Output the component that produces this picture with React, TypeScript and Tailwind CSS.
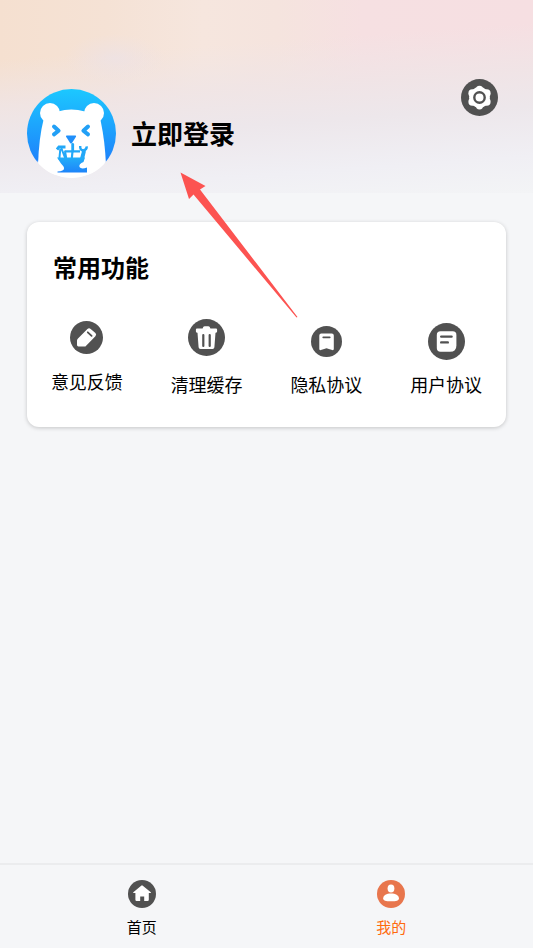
import React from 'react';

interface IconProps {
  className: string;
}

const SettingsIcon: React.FC<IconProps> = ({ className }) => (
  <svg viewBox="0 0 37 37" className={className} aria-hidden="true">
    <circle cx="18.5" cy="18.5" r="18.5" fill="#515151" />
    <g fill="#fff">
      <circle cx="18.5" cy="18.5" r="10.4" />
      <circle cx="18.5" cy="10.4" r="3.6" />
      <circle cx="25.6" cy="14.2" r="4" />
      <circle cx="25.6" cy="22.8" r="4" />
      <circle cx="18.5" cy="26.8" r="3.6" />
      <circle cx="11.4" cy="22.8" r="4" />
      <circle cx="11.4" cy="14.2" r="4" />
    </g>
    <circle cx="18.5" cy="18.5" r="5.2" fill="#fff" stroke="#515151" strokeWidth="2.4" />
  </svg>
);

const PencilIcon: React.FC<IconProps> = ({ className }) => (
  <svg viewBox="0 0 33 33" className={className} aria-hidden="true">
    <circle cx="16.5" cy="16.5" r="16.5" fill="#515151" />
    <path
      d="M8 17.4 17.4 8Q19 6.4 20.7 7.9L25.4 12Q26.9 13.6 25.4 15.2L15.4 25.4H8.4Q7 25.4 7 24V19.6Q7 18.4 8 17.4Z"
      fill="#fff"
    />
    <path d="m17.8 11.3 3.8 3.6" stroke="#515151" strokeWidth="1.8" strokeLinecap="round" />
  </svg>
);

const TrashIcon: React.FC<IconProps> = ({ className }) => (
  <svg viewBox="0 0 37 37" className={className} aria-hidden="true">
    <circle cx="18.5" cy="18.5" r="18.5" fill="#515151" />
    <path
      d="M9 9.5H14.6Q15.2 7.3 16.6 7.3H20.4Q21.8 7.3 22.4 9.5H28Q29.1 9.5 29.1 10.6V12.6Q29.1 13.7 28 13.7H27.5L26.4 28.2Q26.2 30 24.6 30H12.4Q10.8 30 10.6 28.2L9.5 13.7H9Q7.9 13.7 7.9 12.6V10.6Q7.9 9.5 9 9.5Z"
      fill="#fff"
    />
    <path d="M15.3 16v11M21.7 16v11" stroke="#515151" strokeWidth="2.2" strokeLinecap="round" />
  </svg>
);

const BookmarkIcon: React.FC<IconProps> = ({ className }) => (
  <svg viewBox="0 0 31 31" className={className} aria-hidden="true">
    <circle cx="15.5" cy="15.5" r="15.5" fill="#515151" />
    <path
      d="M10.3 7.4H20.8Q22.8 7.4 22.8 9.4V23Q22.8 24.5 21.2 24L15.5 22.2 9.9 24Q8.3 24.5 8.3 23V9.4Q8.3 7.4 10.3 7.4Z"
      fill="#fff"
    />
    <path d="M12.2 11.4h6.6" stroke="#515151" strokeWidth="1.6" strokeLinecap="round" />
  </svg>
);

const DocumentIcon: React.FC<IconProps> = ({ className }) => (
  <svg viewBox="0 0 37 37" className={className} aria-hidden="true">
    <circle cx="18.5" cy="18.5" r="18.5" fill="#515151" />
    <path
      d="M12.5 8.2H24.7Q28.4 8.2 28.4 11.9V22.4Q28.4 28.8 22 28.8H12.5Q8.8 28.8 8.8 25.1V11.9Q8.8 8.2 12.5 8.2Z"
      fill="#fff"
    />
    <path d="M13.2 13.6h10.4M13.2 19.4h6.6" stroke="#515151" strokeWidth="2.4" strokeLinecap="round" />
  </svg>
);

const HomeIcon: React.FC<IconProps> = ({ className }) => (
  <svg viewBox="0 0 28 28" className={className} aria-hidden="true">
    <circle cx="14" cy="14" r="14" fill="#515151" />
    <path
      d="M13.2 5.7Q14 5 14.8 5.7L22.8 12.2Q23.4 12.9 22.5 13H20.8V19.8Q20.8 21 19.6 21H16.2V16.6H12.2V21H8.6Q7.4 21 7.4 19.8V13H5.6Q4.7 12.9 5.3 12.2Z"
      fill="#fff"
    />
  </svg>
);

const UserIcon: React.FC<IconProps> = ({ className }) => (
  <svg viewBox="0 0 28 28" className={className} aria-hidden="true">
    <circle cx="14" cy="14" r="14" fill="#e8764d" />
    <ellipse cx="14" cy="8.4" rx="3.4" ry="4" fill="#fff" />
    <path d="M6.2 18.2C6.2 15.2 9.5 13.4 14 13.4S21.9 15.2 21.9 18.2C21.9 20.8 19.5 21.3 14 21.3S6.2 20.8 6.2 18.2Z" fill="#fff" />
  </svg>
);

const BearAvatar: React.FC<IconProps> = ({ className }) => (
  <svg viewBox="0 0 89 89" className={className} aria-hidden="true">
    <defs>
      <linearGradient id="sky" x1="0" y1="0" x2="0" y2="1">
        <stop offset="0" stopColor="#1cc8ff" />
        <stop offset="0.8" stopColor="#1e83fb" />
        <stop offset="0.84" stopColor="#ffffff" />
      </linearGradient>
      <linearGradient id="pot" x1="0" y1="0" x2="0" y2="1">
        <stop offset="0" stopColor="#22aef8" />
        <stop offset="1" stopColor="#1e84fa" />
      </linearGradient>
      <clipPath id="round">
        <circle cx="44.5" cy="44.5" r="44.5" />
      </clipPath>
    </defs>
    <g clipPath="url(#round)">
      <rect width="89" height="89" fill="url(#sky)" />
      <g fill="#fff">
        <circle cx="23" cy="24" r="10" />
        <circle cx="67" cy="24" r="10" />
        <path d="M16.5 31 31 22.5Q44 18.5 58 22.5L73.5 31Q78 52 79 76L79 89H11V76Q12 48 16.5 31Z" />
      </g>
      <g fill="none" stroke="#22a0f6" strokeWidth="4" strokeLinecap="round" strokeLinejoin="round">
        <path d="m27 37.5 4.6 4.2-4.6 3.6" />
        <path d="m61 37.5-4.6 4.2 4.6 3.6" />
      </g>
      <path d="M40 46.5H48.2Q49.6 46.5 49 47.8L45 54Q44 55.2 43.1 54L39.1 47.8Q38.6 46.5 40 46.5Z" fill="#208ffb" />
      <g stroke="#22a8f8" fill="none">
        <path d="M30 60.5 32 58H38.5" strokeWidth="3" />
        <path d="M34.3 59 38.5 70M33.3 60 32.3 70.5M38 62l1.5 9" strokeWidth="2" />
        <path d="M37.5 62.3H53" strokeWidth="2.2" />
        <path d="M45.7 55.5V62" strokeWidth="2.8" strokeLinecap="round" />
        <path d="M45.5 62 44.7 71" strokeWidth="2.2" />
        <path d="M53.2 57Q52.8 61.2 56.4 61.5 60 60.5 59.7 57.3M56.4 61.5 53.8 71M57.8 62l-2 8" strokeWidth="2.4" />
      </g>
      <path
        d="M30 68.5H58L56.5 73Q51.5 75 52.5 78 54 80.5 60 78.5V83.5H30.5V82.5Q37 82 37 79.5 37.5 78 34 74.5Z"
        fill="url(#pot)"
      />
    </g>
  </svg>
);

const actions = [
  { label: '意见反馈', Icon: PencilIcon, size: 'size-[33px]', spacing: 'gap-[15px] pt-[2px]' },
  { label: '清理缓存', Icon: TrashIcon, size: 'size-[37px]', spacing: 'gap-4' },
  { label: '隐私协议', Icon: BookmarkIcon, size: 'size-[31px]', spacing: 'gap-[15px] pt-[7px]' },
  { label: '用户协议', Icon: DocumentIcon, size: 'size-[37px]', spacing: 'gap-3 pt-[4px]' },
];

const tabs = [
  { label: '首页', Icon: HomeIcon, color: 'text-black' },
  { label: '我的', Icon: UserIcon, color: 'text-[#ff6a0d]' },
];

/**
 * Pointer: tapered arrow laid over the page that leads to the login entry.
 */
const Pointer = () => (
  <svg
    viewBox="0 0 118 146"
    className="pointer-events-none absolute left-[180px] top-[172px] h-[146px] w-[118px]"
    aria-hidden="true"
  >
    <path d="M.5.5 25.5 14 20 17.5 117.5 145 116.5 145.5 13.5 22.5 9 27Z" fill="#fc5351" />
  </svg>
);

const App: React.FC = () => {
  return (
    <div className="relative flex min-h-screen flex-col bg-[#f5f6f8] font-['Liberation_Sans','Noto_Sans_CJK_SC',sans-serif] text-black">
      <header
        className="flex items-start justify-between bg-[radial-gradient(50px_24px_at_115px_58px,#ece2e8aa_0%,#ece2e800_100%),linear-gradient(176deg,#f1e5e400_26%,#efe5e7cc_46%,#ede7ebff_62%,#f0eff4ff_84%,#f3f4f6ff_100%),linear-gradient(to_right,#f5e0d0_0%,#f5e2d5_20%,#f6e6de_38%,#f5e4de_52%,#f6e0e2_68%,#f6dfe2_100%)] pb-[15px] pl-[27px] pr-[35px] pt-[79px]"
      >
        <button className="mt-[10px] flex items-center gap-[15px]">
          <BearAvatar className="size-[89px]" />
          <span className="pt-[2px] text-[26px] font-bold leading-8">立即登录</span>
        </button>
        <button aria-label="设置">
          <SettingsIcon className="size-[37px]" />
        </button>
      </header>

      <main className="flex-1 px-[27px] pt-[29px]">
        <section className="rounded-xl bg-white pb-[27px] pt-[31px] shadow-[0_1px_4px_rgba(0,0,0,0.2)]">
          <h2 className="px-[26px] text-2xl font-bold">常用功能</h2>
          <div className="mt-[34px] grid grid-cols-4 items-start">
            {actions.map(({ label, Icon, size, spacing }) => (
              <button key={label} className={`flex flex-col items-center ${spacing}`}>
                <Icon className={size} />
                <span className="text-lg leading-7">{label}</span>
              </button>
            ))}
          </div>
        </section>
      </main>

      <nav className="grid grid-cols-2 border-t-2 border-[#ebecee] px-[17px] pb-2 pt-[15px]">
        {tabs.map(({ label, Icon, color }) => (
          <a key={label} href="#" className={`flex flex-col items-center gap-2 ${color}`}>
            <Icon className="size-[28px]" />
            <span className="text-[15px] leading-6">{label}</span>
          </a>
        ))}
      </nav>

      <Pointer />
    </div>
  );
};

export default App;
